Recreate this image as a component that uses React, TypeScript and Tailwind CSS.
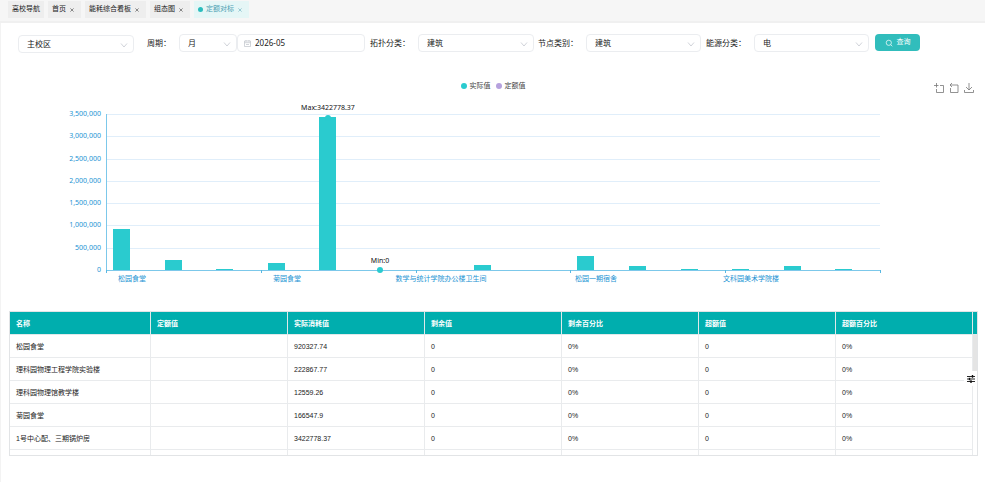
import { useState } from 'react'

const tabs = [
  { name: '高校导航', closable: false },
  { name: '首页', closable: true },
  { name: '能耗综合看板', closable: true },
  { name: '组态图', closable: true },
  { name: '定额对标', closable: true },
]

const columns = ['名称', '定额值', '实际消耗值', '剩余值', '剩余百分比', '超额值', '超额百分比']

const rows = [
  ['松园食堂', '', '920327.74', '0', '0%', '0', '0%'],
  ['理科园物理工程学院实验楼', '', '222867.77', '0', '0%', '0', '0%'],
  ['理科园物理馆教学楼', '', '12559.26', '0', '0%', '0', '0%'],
  ['菊园食堂', '', '166547.9', '0', '0%', '0', '0%'],
  ['1号中心配、三期锅炉房', '', '3422778.37', '0', '0%', '0', '0%'],
  ['', '', '', '', '', '', ''],
]

const values = [920327.74, 222867.77, 12559.26, 166547.9, 3422778.37, 0, 0, 110000, 0, 320000, 95000, 12000, 20000, 85000, 18000]

const xLabels = [
  { index: 0, text: '松园食堂' },
  { index: 3, text: '菊园食堂' },
  { index: 6, text: '数学与统计学院办公楼卫生间' },
  { index: 9, text: '松园一期宿舍' },
  { index: 12, text: '文科园美术学院楼' },
]

// plot area inside the 984 x 193 chart
const LEFT = 105
const RIGHT = 879
const TOP = 17
const BOTTOM = 173
const Y_MAX = 3500000
const STEP = (RIGHT - LEFT) / values.length

const yOf = (v: number) => Math.round(BOTTOM - (v / Y_MAX) * (BOTTOM - TOP))
const barX = (i: number) => Math.round(LEFT + STEP * i + 7)

function Chevron() {
  return (
    <svg viewBox="0 0 8 5" className="pointer-events-none absolute right-1.5 top-2 h-[5px] w-2" fill="none" stroke="#c4c8cf">
      <path d="M1 .5 4 4 7 .5" strokeWidth=".8" />
    </svg>
  )
}

function Select({ id, label, options, className }: { id: string; label: string; options: string[]; className: string }) {
  return (
    <div className={`relative h-[18px] ${className}`}>
      <select
        id={id}
        aria-label={label}
        className="block h-full w-full appearance-none rounded-sm border border-[#ebedf0] bg-white pl-2 pr-4 leading-4 text-[#222] outline-none"
      >
        {options.map((o) => (
          <option key={o}>{o}</option>
        ))}
      </select>
      <Chevron />
    </div>
  )
}

function TabBar() {
  const [active, setActive] = useState('定额对标')
  return (
    <nav className="flex h-[23px] gap-1 border-b-2 border-[#f0f0f0] bg-[#f6f6f6] pl-2 pt-px text-[7px]">
      {tabs.map((tab) => {
        const on = tab.name === active
        return (
          <div
            key={tab.name}
            className={`flex h-[17px] items-center gap-[3px] px-1 ${on ? 'bg-[#e5f6f6] text-[#4c9fb3]' : 'bg-[#eeeeee] text-[#222]'}`}
          >
            {on && <span className="h-[5px] w-[5px] rounded-full bg-[#2bbdbd]" />}
            <button type="button" onClick={() => setActive(tab.name)}>
              {tab.name}
            </button>
            {tab.closable && (
              <button type="button" aria-label={`关闭 ${tab.name}`} className="mr-0.5 p-px">
                <svg viewBox="0 0 4 4" className="h-1 w-1" stroke="currentColor" strokeWidth=".5">
                  <path d="M.4.4 3.6 3.6M3.6.4.4 3.6" />
                </svg>
              </button>
            )}
          </div>
        )
      })}
    </nav>
  )
}

function Filters() {
  return (
    <form className="flex items-start pl-[17px] pt-[11px] text-[8px] text-[#222]" onSubmit={(e) => e.preventDefault()}>
      <Select id="campus" label="校区" options={['主校区']} className="mr-[13px] mt-px w-[116px]" />
      <label htmlFor="period" className="w-8 leading-[17px]">周期：</label>
      <Select id="period" label="周期" options={['月', '年']} className="w-[58px]" />
      <div className="mr-[5px] flex h-[18px] w-[128px] items-center gap-1 rounded-sm border border-[#ebedf0] pl-1.5">
        <svg viewBox="0 0 7 7" className="h-[7px] w-[7px] shrink-0" fill="none" stroke="#bfc3ca" strokeWidth=".7">
          <path d="M.5 1h6v5.5h-6zM.5 2.7h6M2 0v1.6M5 0v1.6M2 4.5h3" />
        </svg>
        <input aria-label="日期" defaultValue="2026-05" className="w-full min-w-0 leading-4 outline-none" />
      </div>
      <label htmlFor="topo" className="w-12 leading-[17px]">拓扑分类：</label>
      <Select id="topo" label="拓扑分类" options={['建筑']} className="mr-1 w-[116px]" />
      <label htmlFor="node" className="w-12 leading-[17px]">节点类别：</label>
      <Select id="node" label="节点类别" options={['建筑']} className="mr-[5px] w-[115px]" />
      <label htmlFor="energy" className="w-12 leading-[17px]">能源分类：</label>
      <Select id="energy" label="能源分类" options={['电', '水']} className="mr-1.5 w-[115px]" />
      <button type="submit" className="flex h-[17px] w-[45px] items-center justify-center gap-1 rounded-sm bg-[#31bdbc] text-[7px] text-white">
        <svg viewBox="0 0 8 8" className="h-2 w-2" fill="none" stroke="currentColor" strokeWidth=".7">
          <circle cx="3.8" cy="3.8" r="2.6" />
          <path d="M5.7 5.7 7.3 7.3" />
        </svg>
        查询
      </button>
    </form>
  )
}

function Toolbox() {
  return (
    <div className="flex items-center gap-[5px] justify-self-end pr-[11px] pt-[5px] text-[#777]">
      <button type="button" aria-label="区域缩放">
        <svg viewBox="0 0 10 10" className="block h-2.5 w-2.5" fill="none" stroke="currentColor" strokeWidth=".8">
          <path d="M2.5 0v4.5M0 2.5h4.5M6 2.5h3.5v7h-7V6" />
        </svg>
      </button>
      <button type="button" aria-label="区域缩放还原">
        <svg viewBox="0 0 10 10" className="block h-2.5 w-2.5" fill="none" stroke="currentColor" strokeWidth=".8">
          <path d="M3 0 1 2l2 2M1 2h8v7.5H1.5V5" />
        </svg>
      </button>
      <button type="button" aria-label="保存为图片">
        <svg viewBox="0 0 10 10" className="block h-2.5 w-2.5" fill="none" stroke="currentColor" strokeWidth=".8">
          <path d="M5 0v7M2 4l3 3 3-3M.5 7v2.5h9V7" />
        </svg>
      </button>
    </div>
  )
}

function Chart() {
  const ticks = [0, 1, 2, 3, 4, 5, 6, 7].map((n) => n * 500000)
  return (
    <section className="pt-[25px]">
      <div className="grid h-[19px] grid-cols-3 items-start">
        <div />
        <div className="flex justify-center gap-[5px] text-[7px] leading-4 text-[#444]">
          <span className="flex items-center gap-[3px]">
            <i className="h-1.5 w-1.5 rounded-full bg-[#2acbcf]" />
            实际值
          </span>
          <span className="flex items-center gap-[3px]">
            <i className="h-1.5 w-1.5 rounded-full bg-[#b6a2de]" />
            定额值
          </span>
        </div>
        <Toolbox />
      </div>
      <svg viewBox="0 0 984 193" className="block w-full" fontSize="7">
        {ticks.map((v) => (
          <g key={v}>
            {v > 0 && <rect x={LEFT} y={yOf(v)} width={RIGHT - LEFT} height="1" fill="#e0eefa" />}
            <text x="100" y={yOf(v) + 2} textAnchor="end" fill="#1b93d3">
              {v.toLocaleString('en-US')}
            </text>
          </g>
        ))}
        {values.map((v, i) => v > 0 && <rect key={i} x={barX(i)} y={yOf(v)} width="17" height={BOTTOM - yOf(v)} fill="#2acbcf" />)}
        <rect x={LEFT} y={TOP} width="1" height={BOTTOM - TOP} fill="#7cc8ea" />
        <rect x={LEFT} y={BOTTOM} width={RIGHT - LEFT} height="1" fill="#7cc8ea" />
        {[0, 3, 6, 9, 12, 15].map((i) => (
          <rect key={i} x={Math.round(LEFT + STEP * i)} y={BOTTOM} width="1" height="3" fill="#58b8e2" />
        ))}
        {xLabels.map((l) => (
          <text key={l.index} x={Math.round(LEFT + STEP * (l.index + 0.5))} y="184" textAnchor="middle" fill="#1b93d3">
            {l.text}
          </text>
        ))}
        <circle cx={barX(4) + 9} cy={yOf(values[4]) + 1} r="3" fill="#2acbcf" />
        <text x={barX(4) + 9} y="13" textAnchor="middle" fill="#111">Max:3422778.37</text>
        <circle cx={barX(5) + 9} cy={BOTTOM} r="3" fill="#2acbcf" />
        <text x={barX(5) + 9} y="166" textAnchor="middle" fill="#111">Min:0</text>
      </svg>
    </section>
  )
}

function DataTable() {
  return (
    <section className="relative ml-[8px] mr-[7px] mt-[21px] h-[145px] overflow-hidden border border-[#e2e4e6]">
      <table className="w-full table-fixed border-separate border-spacing-0 text-left text-[7px] leading-4">
        <colgroup>
          <col className="w-[141px]" />
          <col span={6} />
          <col className="w-1" />
        </colgroup>
        <thead>
          <tr className="h-[23px] bg-[#00aeae] text-white">
            {columns.map((c) => (
              <th key={c} className="border-b border-r border-[#dfe9ea] px-1.5 pb-0 pt-0.5 font-bold">
                {c}
              </th>
            ))}
            <td className="border-b border-[#dfe9ea] p-0" />
          </tr>
        </thead>
        <tbody className="font-['Liberation_Sans','Noto_Sans_CJK_SC',sans-serif] text-[#222]">
          {rows.map((row, r) => (
            <tr key={r} className="h-[23px]">
              {row.map((cell, c) => (
                <td key={c} className="border-b border-r border-[#e9ebed] px-1.5 pb-0 pt-0.5">
                  {cell}
                </td>
              ))}
              <td className="p-0" />
            </tr>
          ))}
        </tbody>
      </table>
      <div className="absolute right-0 top-[23px] h-9 w-1 bg-[#e4e4e4]" />
      <button type="button" aria-label="设置" className="absolute -right-px top-[59px] flex h-[15px] w-3.5 items-center justify-center bg-white">
        <svg viewBox="0 0 8 8" className="h-2 w-2" stroke="#111">
          <path d="M0 1.5h8M0 4h8M0 6.5h8" strokeWidth=".9" />
          <path d="M5.5 0v2.8M2.5 2.8v2.5M4 5.2V8" strokeWidth="1.4" />
        </svg>
      </button>
    </section>
  )
}

export default function App() {
  return (
    <div className="bg-white pr-[15px] font-['Noto_Sans','Noto_Sans_CJK_SC',sans-serif]">
      <TabBar />
      <main className="min-h-[459px] border-l border-[#f3f3f3]">
        <Filters />
        <Chart />
        <DataTable />
      </main>
    </div>
  )
}
